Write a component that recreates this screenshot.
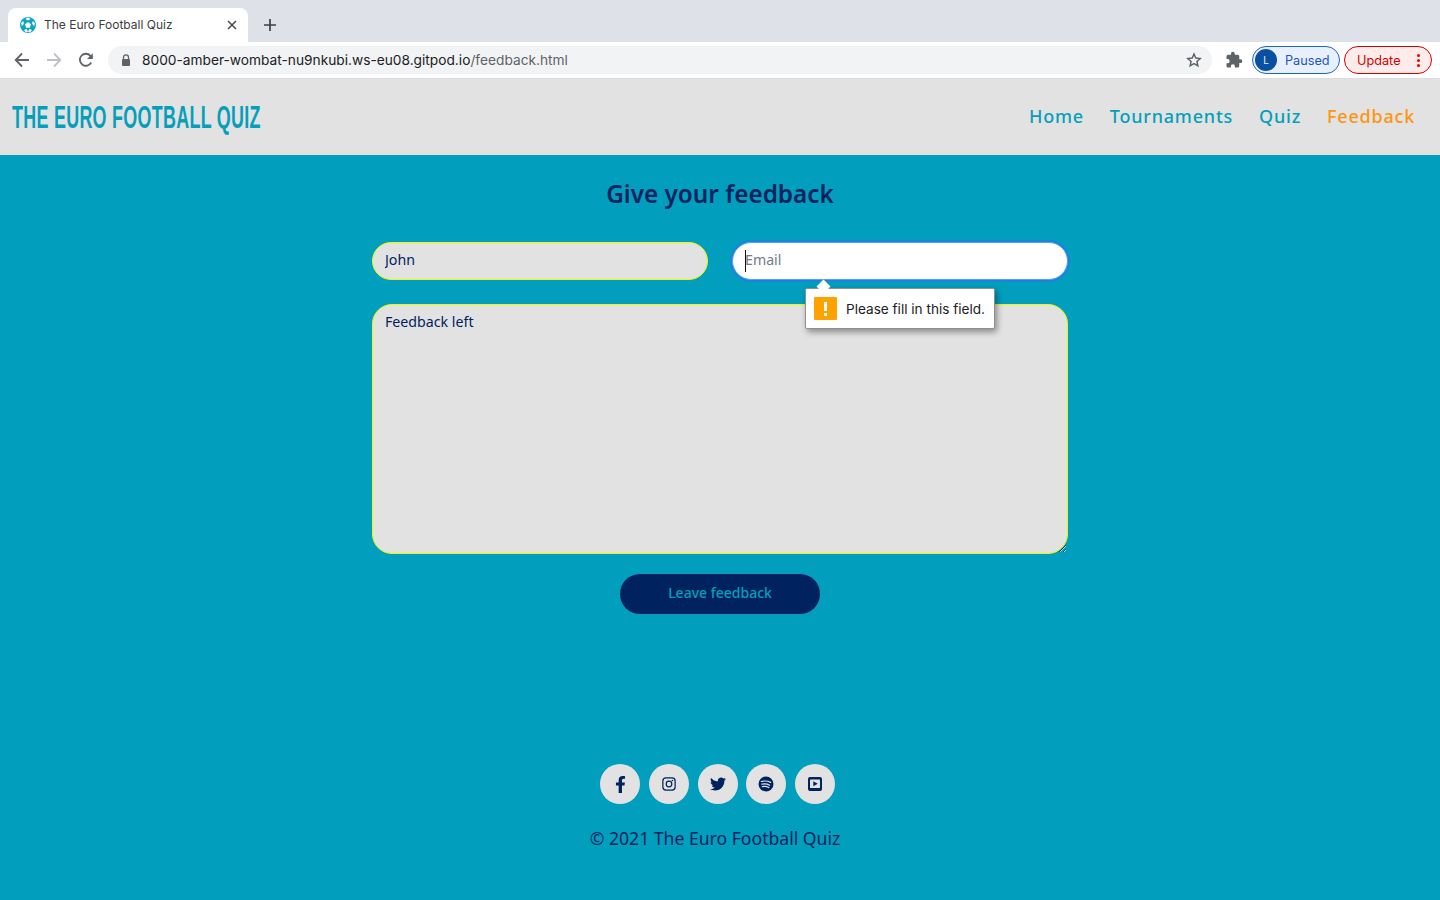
<div class="page">
  <div class="tabstrip">
    <div class="tab">
      <svg class="favicon" viewBox="0 0 16 16" width="16" height="16">
        <circle cx="8" cy="8" r="8" fill="#0ea5c4" />
        <polygon points="8,5 11,7.2 9.9,10.8 6.1,10.8 5,7.2" fill="#fff" />
        <path d="M8 0.6l2.6 1.3L8 3.4 5.4 1.9zM1 6l2.3-1.9.6 2.6-2 2.6zM15 6l-2.3-1.9-.6 2.6 2 2.6zM4 13l2.5-.9L8 14.5l-2 1zM12 13l-2.5-.9L8 14.5l2 1z" fill="#fff" />
      </svg>
      <span class="tab-title">The Euro Football Quiz</span>
      <svg class="tab-close" viewBox="0 0 10 10" width="10" height="10"><path d="M1 1l8 8M9 1l-8 8" stroke="#45494e" stroke-width="1.5" fill="none" /></svg>
    </div>
    <svg class="new-tab" viewBox="0 0 12 12" width="12" height="12"><path d="M6 0v12M0 6h12" stroke="#3c4043" stroke-width="1.7" fill="none" /></svg>
  </div>

  <div class="toolbar">
    <div class="nav-buttons">
      <svg viewBox="0 0 16 16" width="16" height="16"><path d="M15 8H2.2M8 1.5L1.7 8 8 14.500" stroke="#5f6368" stroke-width="1.8" fill="none" /></svg>
      <svg viewBox="0 0 16 16" width="16" height="16"><path d="M1 8h12.800M8 1.500L14.300 8 8 14.500" stroke="#bdc1c6" stroke-width="1.800" fill="none" /></svg>
      <svg viewBox="0 0 16 16" width="16" height="16"><path d="M13.200 10.500A6 6 0 1 1 12.400 3.800L14 5.400" stroke="#5f6368" stroke-width="1.800" fill="none" /><path d="M14.800 1.200V7H9z" fill="#5f6368" /></svg>
    </div>
    <div class="omnibox">
      <svg class="lock" viewBox="0 0 10 12" width="10" height="12"><path d="M2.500 5V3.300a2.500 2.500 0 0 1 5 0V5" stroke="#5f6368" stroke-width="1.300" fill="none" /><rect x="1" y="5" width="8" height="7" rx="1" fill="#5f6368" /></svg>
      <span class="url"><span class="host">8000-amber-wombat-nu9nkubi.ws-eu08.gitpod.io</span><span class="path">/feedback.html</span></span>
      <svg class="star" viewBox="0 0 24 24" width="16" height="16"><path d="M12 3l2.700 6.100 6.600.7-4.900 4.400 1.400 6.500L12 17.400l-5.800 3.300 1.400-6.500-4.900-4.400 6.600-.7z" stroke="#5f6368" stroke-width="2.200" fill="none" /></svg>
    </div>
    <svg class="puzzle" viewBox="0 0 24 24" width="18" height="18"><path d="M20.500 11H19V7a2 2 0 0 0-2-2h-4V3.500a2.500 2.500 0 0 0-5 0V5H4a2 2 0 0 0-2 2v3.800h1.500a2.700 2.700 0 0 1 0 5.400H2V20a2 2 0 0 0 2 2h3.800v-1.500a2.700 2.700 0 0 1 5.400 0V22H17a2 2 0 0 0 2-2v-4h1.500a2.500 2.500 0 0 0 0-5z" fill="#5f6368" /></svg>
    <div class="pill paused"><span class="avatar">L</span><span class="pill-text">Paused</span></div>
    <div class="pill update"><span class="pill-text">Update</span><span class="dots"><i></i><i></i><i></i></span></div>
  </div>

  <header class="site-header">
    <span class="logo">THE EURO FOOTBALL QUIZ</span>
    <nav>
      <a href="#home">Home</a>
      <a href="#tournaments">Tournaments</a>
      <a href="#quiz">Quiz</a>
      <a href="#feedback" class="active">Feedback</a>
    </nav>
  </header>

  <main>
    <h1>Give your feedback</h1>
    <form onsubmit={(e) => e.preventDefault()}>
      <div class="row">
        <input class="field" type="text" value="John" placeholder="Name" />
        <div class="email-wrap">
          <input class="field email" type="email" placeholder="Email" />
          <span class="caret"></span>
          <div class="tooltip">
            <span class="arrow"></span>
            <span class="warn"><i></i><i></i></span>
            <span>Please fill in this field.</span>
          </div>
        </div>
      </div>
      <textarea class="field message" placeholder="Message">Feedback left</textarea>
      <button type="submit">Leave feedback</button>
    </form>
  </main>

  <footer>
    <div class="socials">
      <a href="#fb" aria-label="Facebook"><svg viewBox="0 0 320 512" width="11" height="17"><path d="M279.140 288l14.220-92.660h-88.910v-60.130c0-25.350 12.420-50.060 52.240-50.060h40.420V6.260S260.430 0 225.360 0c-73.220 0-121.080 44.380-121.080 124.720v70.620H22.890V288h81.390v224h100.170V288z" /></svg></a>
      <a href="#ig" aria-label="Instagram"><svg viewBox="0 0 16 16" width="14" height="14"><rect x="1" y="1" width="14" height="14" rx="3.500" class="line" /><circle cx="8" cy="8" r="3.200" class="line" /><circle cx="12" cy="4" r="0.900" /></svg></a>
      <a href="#tw" aria-label="Twitter"><svg viewBox="0 0 512 512" width="16" height="16"><path d="M459.370 151.716c.325 4.548.325 9.097.325 13.645 0 138.720-105.583 298.558-298.558 298.558-59.452 0-114.680-17.219-161.137-47.106 8.447.974 16.568 1.299 25.340 1.299 49.055 0 94.213-16.568 130.274-44.832-46.132-.975-84.792-31.188-98.112-72.772 6.498.974 12.995 1.624 19.818 1.624 9.421 0 18.843-1.300 27.614-3.573-48.081-9.747-84.143-51.980-84.143-102.985v-1.299c13.969 7.797 30.214 12.670 47.431 13.319-28.264-18.843-46.781-51.005-46.781-87.391 0-19.492 5.197-37.360 14.294-52.954 51.655 63.675 129.300 105.258 216.365 109.807-1.624-7.797-2.599-15.918-2.599-24.040 0-57.828 46.782-104.934 104.934-104.934 30.213 0 57.502 12.670 76.670 33.137 23.715-4.548 46.456-13.320 66.599-25.340-7.798 24.366-24.366 44.833-46.132 57.827 21.117-2.273 41.584-8.122 60.426-16.243-14.292 20.791-32.161 39.308-52.628 54.253z" /></svg></a>
      <a href="#sp" aria-label="Spotify"><svg viewBox="0 0 16 16" width="16" height="16"><circle cx="8" cy="8" r="7.500" /><path d="M3.300 5.500c3-.8 6.500-.6 9.300.9M3.800 8.200c2.600-.7 5.500-.4 7.900 1M4.300 10.700c2.200-.5 4.500-.3 6.500.9" class="cut" /></svg></a>
      <a href="#yt" aria-label="YouTube"><svg viewBox="0 0 16 16" width="16" height="16"><path fill-rule="evenodd" d="M3 1h10a2 2 0 0 1 2 2v10a2 2 0 0 1-2 2H3a2 2 0 0 1-2-2V3a2 2 0 0 1 2-2zM3.500 3.500a.5.500 0 0 0-.5.500v7.500a.5.500 0 0 0 .5.500h9a.5.500 0 0 0 .5-.5V4a.5.500 0 0 0-.5-.5z" /><path d="M6.300 5.300l4.400 2.500-4.400 2.500z" /></svg></a>
    </div>
    <p>© 2021 The Euro Football Quiz</p>
  </footer>
</div>

<style>
  :global(body) { margin: 0; background: #019fbd; }
  .page { height: 900px; overflow: hidden; display: flex; flex-direction: column; font-family: "Noto Sans", sans-serif; color: #00235f; }

  .tabstrip { height: 42px; flex: none; box-sizing: border-box; padding: 8px 0 0 8px; background: #dee1e8; display: flex; align-items: flex-start; }
  .tab { width: 240px; height: 34px; box-sizing: border-box; padding: 0 11px 0 12px; display: flex; align-items: center; background: #fff; border-radius: 8px 8px 0 0; }
  .favicon { flex: none; }
  .tab-title { margin-left: 8px; flex: 1; font: 12px/16px Inter, sans-serif; color: #3c4043; }
  .new-tab { margin: 11px 0 0 16px; }

  .toolbar { height: 37px; flex: none; box-sizing: border-box; padding: 4px 8px 0 0; background: #fff; border-bottom: 1px solid #dadce0; display: flex; align-items: flex-start; }
  .nav-buttons { width: 108px; height: 28px; flex: none; box-sizing: border-box; padding-left: 14px; display: flex; align-items: center; gap: 16px; }
  .omnibox { width: 1104px; height: 28px; flex: none; box-sizing: border-box; padding: 0 10px 0 13px; display: flex; align-items: center; background: #f1f3f4; border-radius: 14px; }
  .lock { flex: none; }
  .url { margin-left: 11px; flex: 1; font: 13.730px/18px Inter, sans-serif; white-space: nowrap; }
  .host { color: #202124; }
  .path { color: #5f6368; }
  .puzzle { flex: none; margin: 5px 0 0 13px; }
  .pill { height: 28px; box-sizing: border-box; display: flex; align-items: center; border-radius: 14px; font: 12.700px/16px Inter, sans-serif; }
  .pill-text { margin-top: 1px; }
  .paused { width: 88px; margin-left: 9px; padding-left: 2px; gap: 8px; background: #e8f0fe; border: 1px solid #1a66d2; color: #1a56c4; }
  .avatar { width: 22px; height: 22px; display: flex; align-items: center; justify-content: center; background: #0b4fa3; border-radius: 50%; color: #e8f0fe; font-size: 10px; }
  .update { width: 88px; margin-left: 4px; padding: 0 11px 0 12px; justify-content: space-between; background: #feeceb; border: 1px solid #d50000; color: #d50000; }
  .dots { display: flex; flex-direction: column; gap: 2px; }
  .dots i { width: 3px; height: 3px; background: #e00; border-radius: 50%; }

  .site-header { height: 76px; flex: none; box-sizing: border-box; padding: 0 25px 3px 12px; display: flex; align-items: center; justify-content: space-between; background: #e2e2e2; }
  .logo { display: inline-block; width: 248px; margin-top: 2px; font: 700 32px/40px "Liberation Sans", sans-serif; letter-spacing: 0.5px; color: #059fbb; white-space: nowrap; transform: scaleX(0.56); transform-origin: left center; }
  nav { display: flex; gap: 26px; }
  nav a { font: 500 18px/26px "Noto Sans", sans-serif; letter-spacing: 0.78px; color: #059fbb; text-decoration: none; }
  nav a.active { color: #ff9410; }

  main { height: 539px; flex: none; }
  h1 { margin: 0; padding-top: 22px; font: 600 24.300px/34px "Noto Sans", sans-serif; text-align: center; color: #00235f; }
  form { width: 696px; margin: 31px auto 0; display: flex; flex-direction: column; align-items: center; }
  .row { width: 100%; display: grid; grid-template-columns: 1fr 1fr; gap: 24px; }
  .email-wrap { position: relative; display: flex; }
  .field { width: 100%; box-sizing: border-box; height: 38px; padding: 0 12px 3px; background: #e2e2e2; border: 1px solid #e9fa00; border-radius: 19px; font: 14.200px/20px "Noto Sans", sans-serif; color: #00235f; outline: none; }
  .field::placeholder { color: #727a84; opacity: 1; }
  .email { background: #fff; border-color: #4fa3ee; box-shadow: 0 0 0 2px #1a84dc; }
  .caret { position: absolute; left: 13px; top: 8px; width: 1px; height: 22px; background: #111; }
  .message { height: 250px; margin-top: 24px; padding: 7px 12px; resize: vertical; border-radius: 20px; display: block; }
  button { width: 200px; height: 40px; margin-top: 20px; padding: 0 0 3px; background: #00235f; border: none; border-radius: 20px; font: 500 14px/20px "Noto Sans", sans-serif; color: #059fbb; }

  .tooltip { position: absolute; left: 73px; top: 46px; z-index: 2; width: 190px; height: 41px; box-sizing: border-box; padding: 0 0 0 8px; display: flex; align-items: center; gap: 9px; background: #fff; border: 1px solid #8f8f8f; border-radius: 2px; box-shadow: 2px 3px 6px rgba(0, 0, 0, 0.4); font: 13.600px/18px Inter, sans-serif; color: #202124; white-space: nowrap; }
  .arrow { position: absolute; left: 12px; top: -8px; width: 11px; height: 11px; background: #fff; transform: rotate(45deg) scale(0.9); }
  .warn { width: 23px; height: 23px; flex: none; display: flex; flex-direction: column; align-items: center; justify-content: center; gap: 2px; background: #ffa200; border-radius: 1px; }
  .warn i { width: 3px; height: 9px; background: #fff; }
  .warn i + i { height: 3px; }

  footer { flex: 1; display: flex; flex-direction: column; align-items: center; }
  .socials { display: flex; gap: 8.75px; margin-top: 70px; margin-left: -5px; }
  .socials a { width: 40px; height: 40px; display: flex; align-items: center; justify-content: center; background: #e2e2e2; border-radius: 50%; }
  .socials svg { fill: #00235f; }
  .line { fill: none !important; stroke: #00235f; stroke-width: 1.400; }
  .cut { fill: none !important; stroke: #e2e2e2; stroke-width: 1.200; stroke-linecap: round; }
  footer p { margin: 20px 0 0 -10px; font: 400 17.600px/28px "Noto Sans", sans-serif; color: #00235f; }
</style>
